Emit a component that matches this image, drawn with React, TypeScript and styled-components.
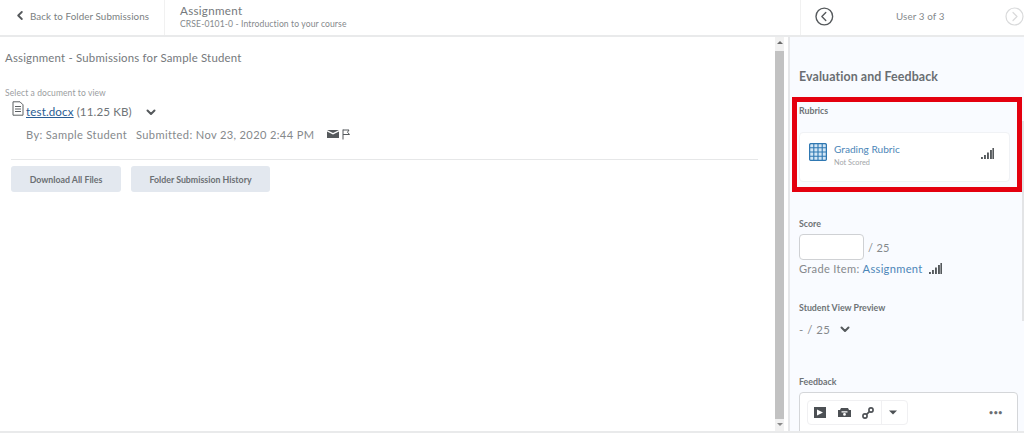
import React from "react";
import styled, { createGlobalStyle } from "styled-components";

const Global = createGlobalStyle`
  html, body { margin: 0; padding: 0; background: #fff; }
  body { font-family: Lato, "Open Sans", sans-serif; color: #6e7376; }
  * { box-sizing: border-box; }
`;
const Page = styled.div`
  width: 1024px; height: 438px; display: flex; flex-direction: column; overflow: hidden; background: #fff;
`;
const Header = styled.header`
  height: 37px; flex: none; display: flex; border-bottom: 2px solid #e9eaeb; background: #fff;
`;
const BackCell = styled.div`
  width: 165px; display: flex; align-items: center; padding: 0 0 4px 17px; gap: 7px;
  font-size: 9.8px; letter-spacing: 0.08px; color: #7b7f82; border-right: 1px solid #f1f1f1;
`;
const TitleCell = styled.div`
  flex: 1; padding: 4px 0 0 15px; display: flex; flex-direction: column; gap: 1px;
`;
const HeadTitle = styled.div` font-size: 11.6px; line-height: 14px; letter-spacing: 0.3px; color: #75797c; `;
const HeadSub = styled.div` font-size: 8.6px; line-height: 11px; letter-spacing: 0.1px; color: #85898c; `;
const PagerCell = styled.div`
  width: 224px; flex: none; border-left: 1px solid #f1f1f1; display: flex; align-items: center;
  padding: 0 0 2px 14px;
`;
const PagerText = styled.div`
  width: 154px; text-align: center; font-size: 9.8px; letter-spacing: 0.12px; color: #85898c; padding: 0 0 2px 22px;
`;
const PagerNext = styled.span` display: flex; margin-left: 20px; flex: none; `;
const Main = styled.div` flex: 1; display: flex; min-height: 0; `;
const Left = styled.main` flex: 1; padding: 13px 17px 0 5px; min-width: 0; `;
const PageTitle = styled.h1`
  margin: 0; font-weight: 400; font-size: 11.4px; line-height: 15px; letter-spacing: 0.2px; color: #75797c;
`;
const Hint = styled.div`
  margin-top: 23px; font-size: 8.5px; line-height: 11px; letter-spacing: 0.1px; color: #9a9da0;
`;
const FileRow = styled.div`
  display: flex; align-items: center; margin: 1px 0 0 7px; height: 20px; font-size: 11.6px; letter-spacing: 0.12px; color: #6f7477;
`;
const DocIcon = styled.svg` margin-top: -3px; flex: none; `;
const FileLink = styled.a`
  color: #2a5c93; text-decoration: underline; margin: 0 3px 0 2px; position: relative; top: 1px;
`;
const FileSize = styled.span` position: relative; top: 1px; `;
const FileChevron = styled.span` display: flex; margin: 5px 0 0 14px; `;
const Meta = styled.div`
  display: flex; align-items: center; margin: 5px 0 0 21px; height: 18px; font-size: 11.1px; letter-spacing: 0.36px; color: #85898c; white-space: nowrap;
`;
const MetaGap = styled.span<{ $w: number }>` width: ${p => p.$w}px; flex: none; `;
const Rule = styled.hr`
  margin: 16px 0 0 6px; border: 0; border-top: 1px solid #e6e7e8;
`;
const Buttons = styled.div` display: flex; gap: 10px; margin: 6px 0 0 6px; `;
const Btn = styled.button<{ $w: number }>`
  width: ${p => p.$w}px; height: 26px; border: 0; border-radius: 3px; background: #e3e8ef; padding: 0;
  font-family: inherit; font-size: 8.8px; font-weight: 700; color: #6c7074;
`;
const Track = styled.div`
  width: 9px; flex: none; margin-right: 4px; display: flex; flex-direction: column; align-items: center; background: #f1f1f1;
`;
const Thumb = styled.div` flex: 1; width: 9px; background: #c2c2c2; margin: 7px 0 4px; `;
const Arrow = styled.div<{ $down?: boolean }>`
  width: 0; height: 0; margin-top: ${p => (p.$down ? 0 : 4)}px; margin-bottom: ${p => (p.$down ? 5 : 0)}px;
  border-left: 3px solid transparent; border-right: 3px solid transparent;
  ${p => (p.$down ? "border-top: 3px solid #8a8a8a;" : "border-bottom: 3px solid #6a6a6a;")}
`;
const Panel = styled.aside`
  width: 236px; flex: none; position: relative; background: #f9fbff; border-left: 2px solid #e6e7e9;
  padding: 33px 6px 0 9px; overflow: hidden;
`;
const PanelTitle = styled.h2`
  margin: 0; font-size: 12.4px; line-height: 14px; font-weight: 700; letter-spacing: 0.1px; color: #6a6e72;
`;
const Label = styled.div<{ $top: number }>`
  margin-top: ${p => p.$top}px; font-size: 8.8px; line-height: 11px; font-weight: 700; color: #6e7376;
`;
const RubricCard = styled.div`
  margin: 16px 8px 0 0; height: 50px; background: #fff; border: 1px solid #f0f2f5; border-radius: 4px;
  display: flex; align-items: center; padding: 0 15px 2px 9px;
`;
const GridIcon = styled.svg` margin-bottom: 8px; flex: none; `;
const RubricText = styled.div` flex: 1; margin-left: 7px; `;
const RubricName = styled.div` font-size: 10.1px; line-height: 13px; color: #4c86b8; `;
const RubricSub = styled.div` font-size: 7.3px; line-height: 13px; color: #a3a6a9; `;
const CardBars = styled.span` display: flex; margin-bottom: 6px; `;
const ScoreRow = styled.div`
  display: flex; align-items: center; gap: 4px; margin-top: 5px; font-size: 11px; letter-spacing: 0.3px; color: #85898c;
`;
const ScoreInput = styled.div`
  width: 65px; height: 26px; background: #fff; border: 1px solid #cfd1d4; border-radius: 4px;
`;
const GradeRow = styled.div`
  display: flex; align-items: center; height: 17px; font-size: 11.1px; letter-spacing: 0.32px; color: #85898c;
`;
const GradeLink = styled.span` color: #4c86b8; margin: 0 6px 0 3px; `;
const PreviewRow = styled.div`
  display: flex; align-items: center; gap: 10px; margin-top: 8px; height: 16px; font-size: 11.4px; letter-spacing: 0.5px; color: #85898c;
`;
const Editor = styled.div`
  margin: 5px 0 0 0; height: 60px; background: #fff; border: 1px solid #d4d6d9; border-radius: 4px;
  padding: 7px 14px 0 7px; display: flex; justify-content: space-between; align-items: flex-start;
`;
const Tools = styled.div`
  display: flex; align-items: center; height: 25px; border: 1px solid #f0f0f2; border-radius: 4px; padding: 0 10px 0 6px;
`;
const ToolSlot = styled.span`
  display: flex; width: 24px;
  &:nth-child(3) { width: 19px; }
`;
const ToolSep = styled.span` width: 1px; height: 25px; background: #f0f0f2; margin: 0 7px 0 0; `;
const Dots = styled.span` font-size: 7px; font-weight: 700; letter-spacing: 0.6px; line-height: 25px; color: #6a6e72; `;
const Highlight = styled.div`
  position: absolute; left: 2px; top: 60px; width: 230px; height: 95px; border: 5px solid #e4000f; pointer-events: none;
`;
const EdgeBar = styled.div`
  position: absolute; right: 0; top: 84px; width: 2px; height: 200px; background: #e3e4e6;
`;
const Footer = styled.footer` height: 7px; flex: none; background: #fff; border-top: 2px solid #e9eaeb; `;

const Chevron = ({ size = 10 }: { size?: number }) => (
  <svg width={size} height={size * 0.7} viewBox="0 0 10 7" fill="none" stroke="#55595c" strokeWidth="2" strokeLinecap="round" strokeLinejoin="round">
    <path d="M1.5 1.5 5 5l3.5-3.5" />
  </svg>
);
const Bars = ({ w = 13 }: { w?: number }) => (
  <svg width={w} height={w} viewBox="0 0 13 13" fill="#55595c">
    <rect x="0" y="10" width="1.9" height="2" />
    <rect x="3" y="8" width="1.9" height="4" />
    <rect x="6" y="5.5" width="1.9" height="6.5" />
    <rect x="9" y="3" width="1.9" height="9" />
    <rect x="11.4" y="1" width="1.6" height="11" />
  </svg>
);
const Circle = ({ muted, dir }: { muted?: boolean; dir: "l" | "r" }) => (
  <svg width="19" height="19" viewBox="0 0 19 19" fill="none" stroke={muted ? "#d9dadb" : "#55595c"} strokeWidth={muted ? 1.2 : 1.4}>
    <circle cx="9.5" cy="9.5" r="8.5" />
    <path d={dir === "l" ? "M11 5.5 7 9.5l4 4" : "M8 5.5l4 4-4 4"} strokeLinecap="round" strokeLinejoin="round" />
  </svg>
);

export default function App() {
  return (
    <Page>
      <Global />
      <Header>
        <BackCell>
          <svg width="6" height="9" viewBox="0 0 6 9" fill="none" stroke="#55595c" strokeWidth="1.8" strokeLinecap="round" strokeLinejoin="round"><path d="M4.8 1 1.2 4.5l3.6 3.5" /></svg>
          <span>Back to Folder Submissions</span>
        </BackCell>
        <TitleCell>
          <HeadTitle>Assignment</HeadTitle>
          <HeadSub>CRSE-0101-0 - Introduction to your course</HeadSub>
        </TitleCell>
        <PagerCell>
          <Circle dir="l" />
          <PagerText>User 3 of 3</PagerText>
          <PagerNext><Circle muted dir="r" /></PagerNext>
        </PagerCell>
      </Header>
      <Main>
        <Left>
          <PageTitle>Assignment - Submissions for Sample Student</PageTitle>
          <Hint>Select a document to view</Hint>
          <FileRow>
            <DocIcon width="12" height="15" viewBox="0 0 12 15" fill="none" stroke="#5c6063" strokeWidth="1">
              <path d="M1 .8h7l3 3v10.4H1z" />
              <path d="M3 5.5h6M3 8h6M3 10.5h6" />
            </DocIcon>
            <FileLink>test.docx</FileLink>
            <FileSize>(11.25 KB)</FileSize>
            <FileChevron><Chevron /></FileChevron>
          </FileRow>
          <Meta>
            <span>By: Sample Student</span>
            <MetaGap $w={9} />
            <span>Submitted: Nov 23, 2020 2:44 PM</span>
            <MetaGap $w={13} />
            <svg width="12" height="8" viewBox="0 0 12 8" fill="#55595c">
              <path d="M0 0h12L6 3zM0 1.6l6 3 6-3V8H0z" />
            </svg>
            <MetaGap $w={3} />
            <svg width="9" height="11" viewBox="0 0 9 11" fill="none" stroke="#55595c" strokeWidth="1">
              <path d="M1 0.5v10M1 1h6L5.5 3.2 7.5 5.5H1" />
            </svg>
          </Meta>
          <Rule />
          <Buttons>
            <Btn $w={110}>Download All Files</Btn>
            <Btn $w={139}>Folder Submission History</Btn>
          </Buttons>
        </Left>
        <Track>
          <Arrow />
          <Thumb />
          <Arrow $down />
        </Track>
        <Panel>
          <PanelTitle>Evaluation and Feedback</PanelTitle>
          <Label $top={21}>Rubrics</Label>
          <RubricCard>
            <GridIcon width="18" height="18" viewBox="0 0 18 18" fill="#d3e6f5" stroke="#2f78b2" strokeWidth="1.1">
              <rect x=".6" y=".6" width="16.8" height="16.8" rx="1.5" strokeWidth="1.3" />
              <path d="M.6 4.8h16.8M.6 9h16.8M.6 13.2h16.8M4.8.6v16.8M9 .6v16.8M13.2.6v16.8" />
            </GridIcon>
            <RubricText>
              <RubricName>Grading Rubric</RubricName>
              <RubricSub>Not Scored</RubricSub>
            </RubricText>
            <CardBars><Bars /></CardBars>
          </RubricCard>
          <Label $top={36}>Score</Label>
          <ScoreRow><ScoreInput /><span>/ 25</span></ScoreRow>
          <GradeRow>
            <span>Grade Item:</span>
            <GradeLink>Assignment</GradeLink>
            <Bars />
          </GradeRow>
          <Label $top={25}>Student View Preview</Label>
          <PreviewRow><span>- / 25</span><Chevron /></PreviewRow>
          <Label $top={39}>Feedback</Label>
          <Editor>
            <Tools>
              <ToolSlot>
                <svg width="12" height="11" viewBox="0 0 12 11" fill="#4c5054"><path d="M0 0h12v11H0zM3 2.5v6l6-3z" fillRule="evenodd" /></svg>
              </ToolSlot>
              <ToolSlot>
                <svg width="13" height="9" viewBox="0 0 13 9" fill="#4c5054"><path d="M3 0h7l1 2h2v7H0V2h2zM3.5 3.2v1.3h6V3.2zM6.5 5a1.4 1.4 0 1 0 0 2.8 1.4 1.4 0 0 0 0-2.8z" fillRule="evenodd" /></svg>
              </ToolSlot>
              <ToolSlot>
                <svg width="12" height="12" viewBox="0 0 12 12" fill="none" stroke="#4c5054" strokeWidth="1.6"><circle cx="3" cy="9" r="2.1" /><circle cx="9" cy="3" r="2.1" /><path d="M4.6 7.4l2.8-2.8" /></svg>
              </ToolSlot>
              <ToolSep />
              <svg width="8" height="5" viewBox="0 0 8 5" fill="#4c5054"><path d="M0 .5h8L4 4.5z" /></svg>
            </Tools>
            <Dots>•••</Dots>
          </Editor>
          <Highlight />
          <EdgeBar />
        </Panel>
      </Main>
      <Footer />
    </Page>
  );
}
